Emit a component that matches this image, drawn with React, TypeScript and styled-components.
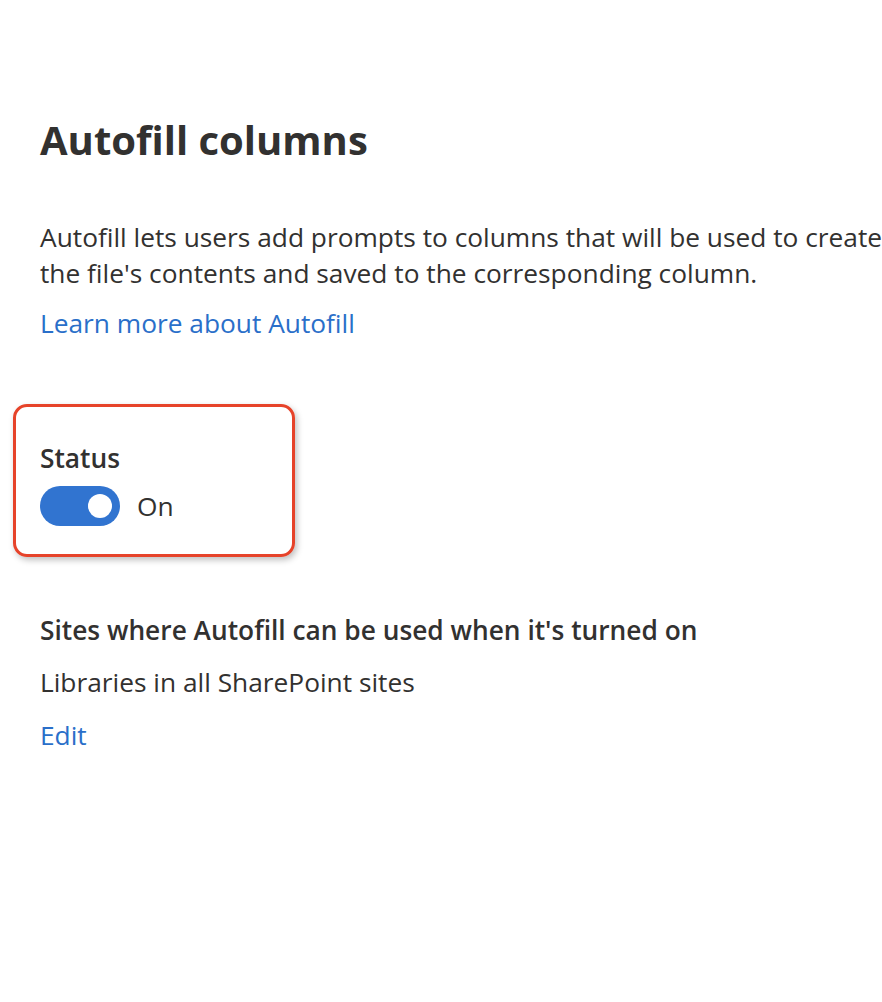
import styled, { createGlobalStyle } from 'styled-components';

const GlobalStyle = createGlobalStyle`
  html, body {
    margin: 0;
    padding: 0;
    background: #ffffff;
  }
  body {
    font-family: "Open Sans", "Noto Sans", Arial, sans-serif;
    color: #323130;
  }
`;

const Page = styled.div`
  width: 882px;
  height: 1002px;
  overflow: hidden;
  padding: 112px 0 0 40px;
  box-sizing: border-box;
  white-space: nowrap;
`;

const Title = styled.h1`
  margin: 0;
  font-size: 40px;
  line-height: 56px;
  font-weight: 700;
  color: #323130;
`;

const Description = styled.p`
  margin: 51px 0 0;
  font-size: 26.3px;
  line-height: 36px;
`;

const Link = styled.a<{ $gap?: number }>`
  display: block;
  margin-top: ${(p) => p.$gap ?? 0}px;
  font-size: 26.3px;
  line-height: 36px;
  color: #2a6fc9;
  text-decoration: none;
`;

const StatusCard = styled.div`
  margin: 63px 0 0 -27px;
  width: 282px;
  height: 153px;
  box-sizing: border-box;
  border: 3px solid #e6432a;
  border-radius: 14px;
  box-shadow: 2px 3px 6px rgba(0, 0, 0, 0.25);
  padding: 35px 0 0 24px;
`;

const Label = styled.div`
  font-size: 26.3px;
  line-height: 32px;
  font-weight: 600;
  color: #323130;
`;

const ToggleRow = styled.div`
  display: flex;
  align-items: center;
  gap: 17px;
  margin-top: 12px;
`;

const Track = styled.div<{ $on: boolean }>`
  width: 80px;
  height: 40px;
  border-radius: 20px;
  background: ${(p) => (p.$on ? '#3174d0' : '#ffffff')};
  display: flex;
  align-items: center;
  justify-content: ${(p) => (p.$on ? 'flex-end' : 'flex-start')};
  padding: 0 8px;
  box-sizing: border-box;
`;

const Knob = styled.div`
  width: 24px;
  height: 24px;
  border-radius: 50%;
  background: #ffffff;
`;

const ToggleText = styled.span`
  font-size: 26.3px;
  line-height: 32px;
`;

const Section = styled.div`
  margin-top: 57px;
`;

const Value = styled.div`
  margin-top: 18px;
  font-size: 26.3px;
  line-height: 36px;
`;

export default function App() {
  return (
    <>
      <GlobalStyle />
      <Page>
        <Title>Autofill columns</Title>
        <Description>
          Autofill lets users add prompts to columns that will be used to create
          <br />
          the file's contents and saved to the corresponding column.
        </Description>
        <Link $gap={14}>Learn more about Autofill</Link>
        <StatusCard>
          <Label>Status</Label>
          <ToggleRow>
            <Track $on>
              <Knob />
            </Track>
            <ToggleText>On</ToggleText>
          </ToggleRow>
        </StatusCard>
        <Section>
          <Label>Sites where Autofill can be used when it's turned on</Label>
          <Value>Libraries in all SharePoint sites</Value>
          <Link $gap={17}>Edit</Link>
        </Section>
      </Page>
    </>
  );
}
